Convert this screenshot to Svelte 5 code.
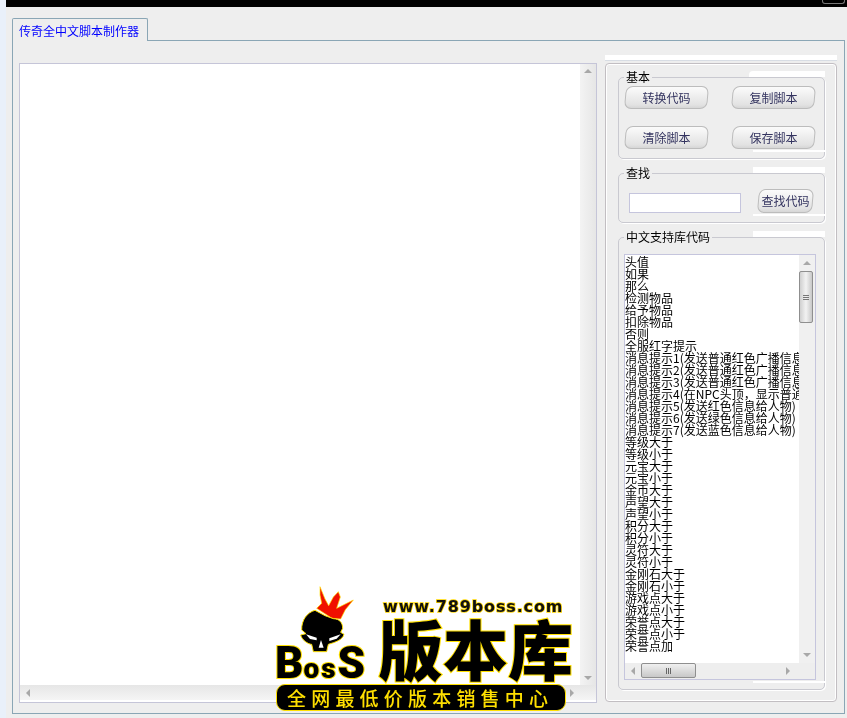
<script>
	const items = [
		'头值', '如果', '那么', '检测物品', '给予物品', '扣除物品', '否则', '全服红字提示',
		'消息提示1(发送普通红色广播信息', '消息提示2(发送普通红色广播信息', '消息提示3(发送普通红色广播信息',
		'消息提示4(在NPC头顶，显示普通', '消息提示5(发送红色信息给人物)', '消息提示6(发送绿色信息给人物)',
		'消息提示7(发送蓝色信息给人物)', '等级大于', '等级小于', '元宝大于', '元宝小于', '金币大于',
		'声望大于', '声望小于', '积分大于', '积分小于', '灵符大于', '灵符小于', '金刚石大于', '金刚石小于',
		'游戏点大于', '游戏点小于', '荣誉点大于', '荣誉点小于', '荣誉点加'
	];
</script>

<div class="page">
	<div class="topbar"></div>
	<div class="corner"></div>
	<div class="tabs">
		<div class="tab">传奇全中文脚本制作器</div>
	</div>
	<div class="pane">
		<div class="editor">
			<div class="editor-body">
				<div class="editor-text"></div>
				<div class="vbar">
					<span class="arrow up"></span>
					<span class="arrow down"></span>
				</div>
			</div>
			<div class="hbar">
				<span class="arrow left"></span>
				<span class="arrow right"></span>
			</div>
		</div>

		<div class="side">
			<div class="side-strip"></div>
			<div class="side-box">
				<fieldset class="group basic">
					<legend>基本</legend>
					<div class="btn-grid">
						<button>转换代码</button>
						<button>复制脚本</button>
						<button>清除脚本</button>
						<button>保存脚本</button>
					</div>
				</fieldset>

				<fieldset class="group search">
					<legend>查找</legend>
					<div class="search-row">
						<input type="text" />
						<button class="small">查找代码</button>
					</div>
				</fieldset>

				<fieldset class="group lib">
					<legend>中文支持库代码</legend>
					<div class="list">
						<div class="list-main">
							<div class="list-items">
								{#each items as item}
									<div class="item">{item}</div>
								{/each}
							</div>
							<div class="vbar list-v">
								<span class="arrow up"></span>
								<span class="thumb-v"><i></i><i></i><i></i></span>
								<span class="arrow down"></span>
							</div>
						</div>
						<div class="hbar list-h">
							<span class="arrow left"></span>
							<span class="thumb-h"><i></i><i></i><i></i></span>
							<span class="arrow right"></span>
						</div>
					</div>
				</fieldset>
			</div>
		</div>
	</div>

	<!-- watermark sitting over the window -->
	<div class="mark">
		<svg class="skull" viewBox="0 0 330 300" width="110" height="100">
			<path d="M150 5 L165 42 L176 62 L190 36 L205 20 L211 36 L200 70 L250 45 L226 74 L212 102 L186 100 L140 70 L155 55 L150 30 Z" fill="#f01000" stroke="#ffe000" stroke-width="2" />
			<path d="M135 76 C112 82 94 105 95 135 L108 146 L92 150 C95 165 115 178 125 178 L130 200 L170 200 L175 178 C195 172 218 165 222 148 L212 142 L218 130 C218 112 208 102 190 101 L165 92 Z" fill="#000" stroke="#ffe000" stroke-width="3" />
			<path d="M108 148 L140 158 L140 166 L120 162 Z" fill="#fff" />
			<path d="M212 148 L178 160 L178 168 L200 161 Z" fill="#fff" />
			<path d="M153 165 L161 188 L146 188 Z" fill="#fff" />
		</svg>
		<div class="url">www.789boss.com</div>
		<div class="boss"><span>B</span><span class="sm">os</span><span>S</span></div>
		<div class="big">版本库</div>
		<div class="slogan">全网最低价版本销售中心</div>
	</div>
</div>

<style>
	:global(body) {
		margin: 0;
		background: #eeeeee;
	}

	.page {
		position: relative;
		width: 847px;
		height: 718px;
		background: #eeeeee;
		overflow: hidden;
		box-sizing: border-box;
		padding-left: 12px;
		padding-right: 2px;
		font-family: "Noto Sans CJK SC", "Liberation Sans", sans-serif;
		font-size: 12px;
		will-change: transform;
	}

	.page::before {
		content: '';
		position: absolute;
		left: 0;
		top: 0;
		bottom: 0;
		width: 6px;
		background: #e9f0fa;
	}

	.topbar {
		height: 7px;
		margin-left: -6px;
		margin-right: -2px;
		background: #000;
	}

	.corner {
		position: absolute;
		top: 0;
		left: 822px;
		width: 23px;
		height: 4px;
		box-sizing: border-box;
		border: 1px solid #777;
		border-top: 0;
		border-radius: 0 0 3px 3px;
	}

	.tabs {
		display: flex;
		height: 33px;
		align-items: flex-end;
	}

	.tab {
		box-sizing: border-box;
		width: 136px;
		height: 23px;
		margin-bottom: -1px;
		position: relative;
		z-index: 1;
		padding: 4px 0 0 6px;
		border: 1px solid #8aa6b5;
		border-bottom: 0;
		border-radius: 2px 2px 0 0;
		background: #eeeeee;
		color: #0000ff;
		line-height: 16px;
		white-space: nowrap;
	}

	.pane {
		box-sizing: border-box;
		height: 674px;
		border: 1px solid #8aa6b5;
		display: flex;
		padding: 14px 6px 0 6px;
		gap: 8px;
	}

	.editor {
		box-sizing: border-box;
		width: 578px;
		height: 640px;
		margin-top: 8px;
		border: 1px solid #c5c5d8;
		background: #fff;
		display: flex;
		flex-direction: column;
		padding: 0 0 2px 0;
	}

	.editor-body {
		flex: 1;
		display: flex;
		min-height: 0;
	}

	.editor-text {
		flex: 1;
		background: #fff;
	}

	.vbar {
		width: 16px;
		display: flex;
		flex-direction: column;
		align-items: center;
		justify-content: space-between;
		padding: 5px 0;
		box-sizing: border-box;
		background: linear-gradient(90deg, #f3f3f3, #e6e6e6);
	}

	.hbar {
		height: 15px;
		display: flex;
		align-items: center;
		justify-content: space-between;
		padding: 0 22px 0 6px;
		background: linear-gradient(#e6e6e6, #f5f5f5);
	}

	.arrow {
		display: block;
		width: 0;
		height: 0;
		border: 4px solid transparent;
	}

	.arrow.up {
		border-top: 0;
		border-bottom: 4px solid #a8a8a8;
	}

	.arrow.down {
		border-bottom: 0;
		border-top: 4px solid #a8a8a8;
	}

	.arrow.left {
		border-left: 0;
		border-right: 4px solid #a8a8a8;
	}

	.arrow.right {
		border-right: 0;
		border-left: 4px solid #a8a8a8;
	}

	.side {
		width: 232px;
		display: flex;
		flex-direction: column;
	}

	.side-strip {
		height: 5px;
		margin-bottom: 2px;
		background: #fff;
		border-bottom: 1px solid #d8dde4;
	}

	.side-box {
		box-sizing: border-box;
		height: 639px;
		border: 1px solid #c2bec2;
		border-radius: 4px;
		box-shadow: inset 0 0 0 1px #fff;
		padding: 6px 11px 0 12px;
		display: flex;
		flex-direction: column;
		gap: 7px;
	}

	.group {
		position: relative;
		margin: 0;
		padding: 0;
		box-sizing: border-box;
		border: 1px solid #c9c9d0;
		border-radius: 5px;
		box-shadow: 1px 1px 0 #fff;
		min-width: 0;
	}

	/* the white scraps the old skin leaves on the right of each frame */
	.group::before {
		content: '';
		position: absolute;
		right: -1px;
		top: -13px;
		width: 72px;
		height: 6px;
		background: #fff;
	}

	.group::after {
		content: '';
		position: absolute;
		right: -1px;
		bottom: -3px;
		width: 72px;
		height: 2px;
		background: #fff;
	}

	.basic::before {
		width: 76px;
		border-radius: 4px 0 0 0;
	}

	.group legend {
		margin-left: 5px;
		padding: 0 2px;
		height: 14px;
		line-height: 14px;
		color: #000;
	}

	.basic {
		height: 89px;
	}

	.btn-grid {
		display: grid;
		grid-template-columns: 83px 83px;
		grid-template-rows: 23px 23px;
		justify-content: space-between;
		row-gap: 17px;
		padding: 2px 9px 0 6px;
	}

	button {
		position: relative;
		z-index: 0;
		padding: 0;
		margin: 0;
		border: 0;
		background: none;
		color: #33335f;
		font-family: inherit;
		font-size: 12px;
		line-height: 20px;
	}

	button::before {
		content: '';
		position: absolute;
		inset: 0;
		z-index: -1;
		box-sizing: border-box;
		border: 1px solid #bcbcbc;
		border-radius: 7px;
		background: linear-gradient(#fbfbfb, #e2e2e2 85%, #d6d6d6);
		transform: skewX(-5deg);
	}

	.search {
		height: 57px;
	}

	.search-row {
		display: flex;
		align-items: center;
		justify-content: space-between;
		padding: 9px 11px 0 10px;
	}

	input {
		box-sizing: border-box;
		width: 112px;
		height: 20px;
		margin: 4px 0 0;
		padding: 0;
		border: 1px solid #c5c5dd;
		background: #fff;
		outline: none;
	}

	.small {
		width: 55px;
		height: 24px;
	}

	.lib {
		height: 460px;
	}

	.list {
		box-sizing: border-box;
		width: 192px;
		height: 426px;
		margin: 10px 0 0 5px;
		border: 1px solid #c5c5dd;
		background: #fff;
		display: flex;
		flex-direction: column;
	}

	.list-main {
		flex: 1;
		display: flex;
		min-height: 0;
	}

	.list-items {
		flex: 1;
		min-width: 0;
		overflow: hidden;
		padding-top: 1px;
		color: #000;
	}

	.item {
		height: 12px;
		line-height: 12px;
		white-space: nowrap;
	}

	.list-v {
		position: relative;
		padding: 6px 0 6px;
		background: #f0f0f0;
	}

	.thumb-v {
		position: absolute;
		top: 16px;
		left: 0;
		box-sizing: border-box;
		width: 14px;
		height: 52px;
		border: 1px solid #8f8f8f;
		border-radius: 2px;
		background: linear-gradient(90deg, #d0d0d0, #f2f2f2 50%, #c8c8c8);
		display: flex;
		flex-direction: column;
		align-items: center;
		justify-content: center;
		gap: 1px;
	}

	.thumb-v i {
		width: 6px;
		height: 1px;
		background: #777;
	}

	.list-h {
		position: relative;
		height: 16px;
		padding: 0 25px 0 6px;
		background: #eeeeee;
	}

	.thumb-h {
		position: absolute;
		left: 16px;
		top: 0;
		box-sizing: border-box;
		width: 55px;
		height: 15px;
		border: 1px solid #8f8f8f;
		border-radius: 2px;
		background: linear-gradient(#f0f0f0, #c8c8c8);
		display: flex;
		align-items: center;
		justify-content: center;
		gap: 1px;
	}

	.thumb-h i {
		width: 1px;
		height: 6px;
		background: #666;
	}

	.mark {
		position: absolute;
		left: 274px;
		top: 585px;
		width: 300px;
		height: 128px;
	}

	.skull {
		position: absolute;
		left: -4px;
		top: 0;
		overflow: visible;
	}

	.url {
		position: absolute;
		left: 109px;
		top: 13px;
		font: bold 16px/18px "DejaVu Sans", sans-serif;
		letter-spacing: 0.85px;
		color: #111;
		-webkit-text-stroke: 1.5px #ffd800;
		paint-order: stroke fill;
		white-space: nowrap;
	}

	.boss {
		position: absolute;
		left: 1px;
		top: 56px;
		font: 900 44px/44px Roboto, "Liberation Sans", sans-serif;
		color: #000;
		-webkit-text-stroke: 2px #ffe000;
		paint-order: stroke fill;
		white-space: nowrap;
	}

	.boss .sm {
		font-size: 28px;
		letter-spacing: 2px;
	}

	.big {
		position: absolute;
		left: 104px;
		top: 25px;
		font: 900 65px/74px "Noto Sans CJK SC", sans-serif;
		color: #000;
		-webkit-text-stroke: 2px #ffe000;
		paint-order: stroke fill;
		white-space: nowrap;
	}

	.slogan {
		position: absolute;
		left: 2px;
		top: 99px;
		width: 290px;
		height: 27px;
		box-sizing: border-box;
		border: 1px solid #ffe000;
		border-radius: 9px;
		background: #000;
		color: #ffe000;
		font: 500 19px/25px "Noto Sans CJK SC", sans-serif;
		letter-spacing: 5.2px;
		padding-left: 10px;
		white-space: nowrap;
	}
</style>
